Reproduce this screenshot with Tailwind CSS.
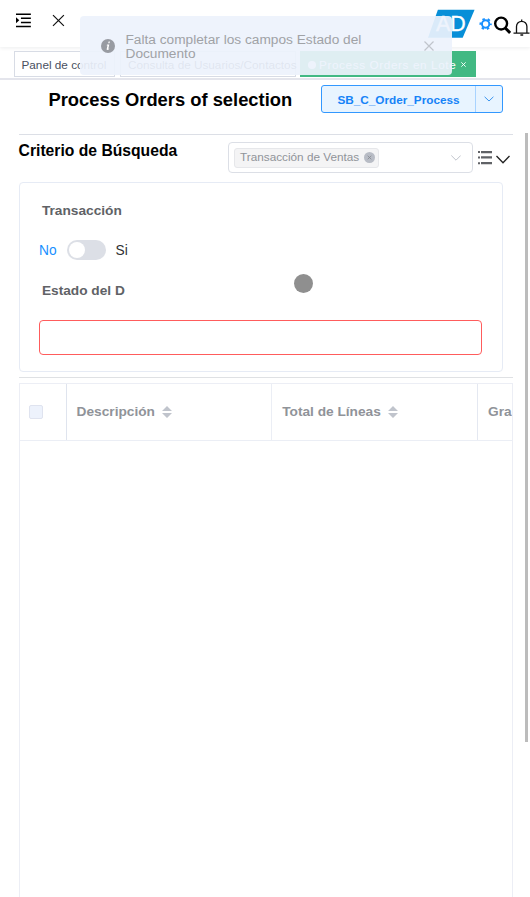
<!DOCTYPE html>
<html lang="es">
<head>
<meta charset="utf-8">
<title>Process Orders of selection</title>
<script src="https://cdn.jsdelivr.net/npm/@tailwindcss/browser@4"></script>
</head>
<body class="bg-white">
<div class="relative h-[897px] w-[530px] overflow-hidden bg-white font-['Liberation_Sans',Arial,sans-serif] text-[#303133] flex flex-col">
  <header class="relative flex h-[47px] shrink-0 items-start shadow-[0_1px_4px_rgba(0,21,41,0.08)]">
    <svg class="ml-[15px] mt-[13px] h-[15px] w-[17px]" viewBox="0 0 17 15" fill="none" stroke="#000" stroke-width="1.5"><path d="M1 1.2H16M6 5.3H16M6 9.4H16M1 13.5H16"/><path d="M1 4.2L4.3 7.3L1 10.4Z" fill="#000" stroke="none"/></svg>
    <svg class="ml-[20px] mt-[14px] h-[13px] w-[13px]" viewBox="0 0 13 13" fill="none" stroke="#111" stroke-width="1.2"><path d="M1 1L12 12M12 1L1 12"/></svg>
    <svg class="ml-[363px] mt-[9px] h-[30px] w-[48px]" viewBox="0 0 48 30"><path d="M10 .7H47L35 29H0Z" fill="#078fd8"/><text x="8" y="22.5" font-size="22" font-weight="400" fill="#fff" stroke="#fff" stroke-width=".3" textLength="30" lengthAdjust="spacingAndGlyphs">AD</text></svg>
    <svg class="ml-[3px] mt-[17px] h-[14px] w-[14px]" viewBox="0 0 14 14" fill="none" stroke="#1890ff"><circle cx="7.7" cy="7" r="3.7" stroke-width="2"/><circle cx="7.7" cy="7" r="5.2" stroke-width="2" stroke-dasharray="2.4 3.045" stroke-dashoffset="1.2"/></svg>
    <svg class="ml-[1px] mt-[16px] h-[19px] w-[18px]" viewBox="0 0 18 19" fill="none" stroke="#000"><circle cx="8.2" cy="7.5" r="6" stroke-width="2.4"/><path d="M12.4 12L17.3 17" stroke-width="3"/></svg>
    <svg class="ml-[2px] mt-[18px] h-[18px] w-[17px] shrink-0" viewBox="0 0 17 18" fill="none" stroke="#111" stroke-width="1.3"><path d="M.5 15.2H16.5M3.5 15V8.5a5.2 5.2 0 0 1 10.4 0V15M8.7 1.4V3M7.4 17H10.2"/></svg>
  </header>
  <nav class="flex h-[33px] shrink-0 gap-[5px] border-b-2 border-[#e4e5ec] pl-[14px] pt-[4px] text-[11.75px]">
    <div class="flex h-[26px] w-[101px] shrink-0 items-center whitespace-nowrap border border-[#d8dce5] pb-px pl-[6.5px] pt-[2px] text-[#495060]">Panel de control</div>
    <div class="flex h-[26px] w-[176px] shrink-0 items-center whitespace-nowrap border border-[#d8dce5] pl-[7px] pt-px text-[#495060]">Consulta de Usuarios/Contactos</div>
    <div class="-ml-px flex h-[26px] w-[176px] shrink-0 items-center whitespace-nowrap bg-[#42b983] pl-[8px] pt-px text-white"><span class="mr-[3px] h-[8px] w-[8px] rounded-full bg-white"></span><span class="w-[137px] tracking-[.6px]">Process Orders en Lote</span><svg class="ml-[5px] h-[5px] w-[5px]" viewBox="0 0 5 5" stroke="#fff" stroke-width=".9"><path d="M.3.3L4.7 4.7M4.7.3L.3 4.7"/></svg></div>
  </nav>
  <div class="flex h-[54px] shrink-0 items-start">
    <h1 class="ml-[48.5px] mt-[9px] w-[272.5px] whitespace-nowrap text-[18.35px] font-bold leading-[22px] text-black">Process Orders of selection</h1>
    <div class="mt-[5px] flex h-[28px] w-[182px] rounded-[3px] border border-[#3298ff] bg-[#e8f4ff] text-[#1683f7]">
      <button class="w-[154px] border-r border-[#a8d3ff] pt-px text-[11.75px] font-bold">SB_C_Order_Process</button>
      <span class="flex flex-1 items-center justify-center"><svg class="h-[6px] w-[10px]" viewBox="0 0 10 6" fill="none" stroke="#3b94ee"><path d="M.6.8L5 5L9.4.8"/></svg></span>
    </div>
  </div>
  <main class="flex min-h-0 flex-1">
    <div class="ml-[18.6px] flex w-[494px] flex-col">
      <section class="flex h-[48px] shrink-0 items-start border-t border-[#dcdfe6]">
        <h2 class="mt-[7px] w-[209.5px] whitespace-nowrap text-[15.7px] font-bold leading-[18px] text-black">Criterio de Búsqueda</h2>
        <div class="mt-[7px] flex h-[31px] w-[245px] items-center rounded-[4px] border border-[#dcdfe6] pl-[5px] pr-[11px]">
          <span class="flex h-[20px] w-[145px] items-center rounded-[3px] border border-[#e6e7ea] bg-[#f4f4f5] pl-[5px] text-[11.75px] text-[#909399]"><span class="-mt-[2px] w-[124px] whitespace-nowrap">Transacción de Ventas</span><svg class="h-[11px] w-[11px] shrink-0" viewBox="0 0 11 11"><circle cx="5.5" cy="5.5" r="5.5" fill="#b8bcc5"/><path d="M3.7 3.7L7.3 7.3M7.3 3.7L3.7 7.3" stroke="#858990" stroke-width=".8"/></svg></span>
          <svg class="ml-auto h-[6px] w-[10px]" viewBox="0 0 10 6" fill="none" stroke="#c0c4cc"><path d="M.3.5L5 5.2L9.7.5"/></svg>
        </div>
        <svg class="ml-[5px] mt-[16px] h-[14px] w-[14px]" viewBox="0 0 14 14" fill="#606266"><path d="M0 0H2V2H0ZM3 0H14V2.3H3ZM0 5.5H2V7.5H0ZM3 5.3H14V7.6H3ZM0 11.2H2V13.2H0ZM3 11H14V13.3H3Z"/></svg>
        <svg class="ml-[4px] mt-[20px] h-[9px] w-[14px]" viewBox="0 0 14 9" fill="none" stroke="#222" stroke-width="1.3"><path d="M.5 1L7 7.8L13.5 1"/></svg>
      </section>
      <section class="flex h-[190px] w-[484px] shrink-0 flex-col rounded-[4px] border border-[#e6ebf5] pl-[19.5px]">
        <label class="ml-[2.8px] mt-[19px] h-[18px] text-[13.7px] font-bold leading-[18px] text-[#606266]">Transacción</label>
        <div class="mt-[20px] flex h-[20px] items-center text-[13.75px]"><span class="w-[27.5px] pt-[2px] text-[#1890ff]">No</span><span class="flex h-[20px] w-[39px] items-center rounded-full bg-[#dcdfe6] pl-[2px]"><span class="h-[16px] w-[16px] rounded-full bg-white"></span></span><span class="ml-[10px] pt-[2px]">Si</span></div>
        <label class="ml-[2.8px] mt-[22px] h-[18px] text-[13.7px] font-bold leading-[18px] text-[#606266]">Estado del D</label>
        <div class="mt-[20px] h-[35px] w-[443px] rounded-[4px] border border-[#ff5c5c]"></div>
      </section>
      <div class="mt-[5px] h-px shrink-0 bg-[#dfe1e4]"></div>
      <section class="mt-[5px] flex min-h-0 flex-1 flex-col border-x border-t border-[#eceef5]">
        <div class="flex h-[57px] shrink-0 overflow-hidden border-b border-[#ebeef5] text-[13.7px] font-bold text-[#909399]">
          <div class="flex w-[47px] shrink-0 items-center border-r border-[#dfe4ee] pb-px pl-[9.5px]"><span class="h-[14px] w-[14px] rounded-[2px] border border-[#dfe3ef] bg-[#edf2fc]"></span></div>
          <div class="flex w-[205px] shrink-0 items-center gap-[7px] border-r border-[#ebeef5] pl-[10px]">Descripción<svg class="h-[12px] w-[10px]" viewBox="0 0 10 12" fill="#c0c4cc"><path d="M5 0L10 5H0ZM0 7H10L5 12Z"/></svg></div>
          <div class="flex w-[206px] shrink-0 items-center gap-[7px] border-r border-[#e4e8f1] pl-[10.6px]">Total de Líneas<svg class="h-[12px] w-[10px]" viewBox="0 0 10 12" fill="#c0c4cc"><path d="M5 0L10 5H0ZM0 7H10L5 12Z"/></svg></div>
          <div class="flex w-[34px] items-center overflow-hidden whitespace-nowrap pl-[10.5px]">Grand Total</div>
        </div>
      </section>
    </div>
    <div class="ml-[12.4px] mt-[-1px] h-[609px] w-[3px] bg-[#bcbcbc]"></div>
  </main>
  <aside class="absolute left-[80px] top-[16px] flex h-[59px] w-[372px] rounded-[4px] bg-[#edf2fc]/[0.92]">
    <svg class="ml-[21px] mt-[23px] h-[14px] w-[14px]" viewBox="0 0 14 14"><circle cx="7" cy="7" r="7" fill="#989ba2"/><path d="M7.6 2.6h1.3l-.4 1.6H7.2ZM6 5.4h2.3L7.3 9.7l1-.3-.3.8c-.7.7-2.6 1.2-2.3-.2l.8-3.6-.8.1Z" fill="#fff"/></svg>
    <p class="ml-[10.5px] mt-[17px] w-[270px] text-[13.7px] leading-[14px] text-[#a0a2a6]">Falta completar los campos Estado del Documento</p>
    <svg class="ml-[28px] mt-[25px] h-[10px] w-[10px]" viewBox="0 0 10 10" stroke="#c0c4cc" stroke-width="1.2"><path d="M.5.5L9.5 9.5M9.5.5L.5 9.5"/></svg>
  </aside>
  <div class="absolute left-[294px] top-[274px] h-[19px] w-[19px] rounded-full bg-[#8f8f8f]"></div>
</div>
</body>
</html>
